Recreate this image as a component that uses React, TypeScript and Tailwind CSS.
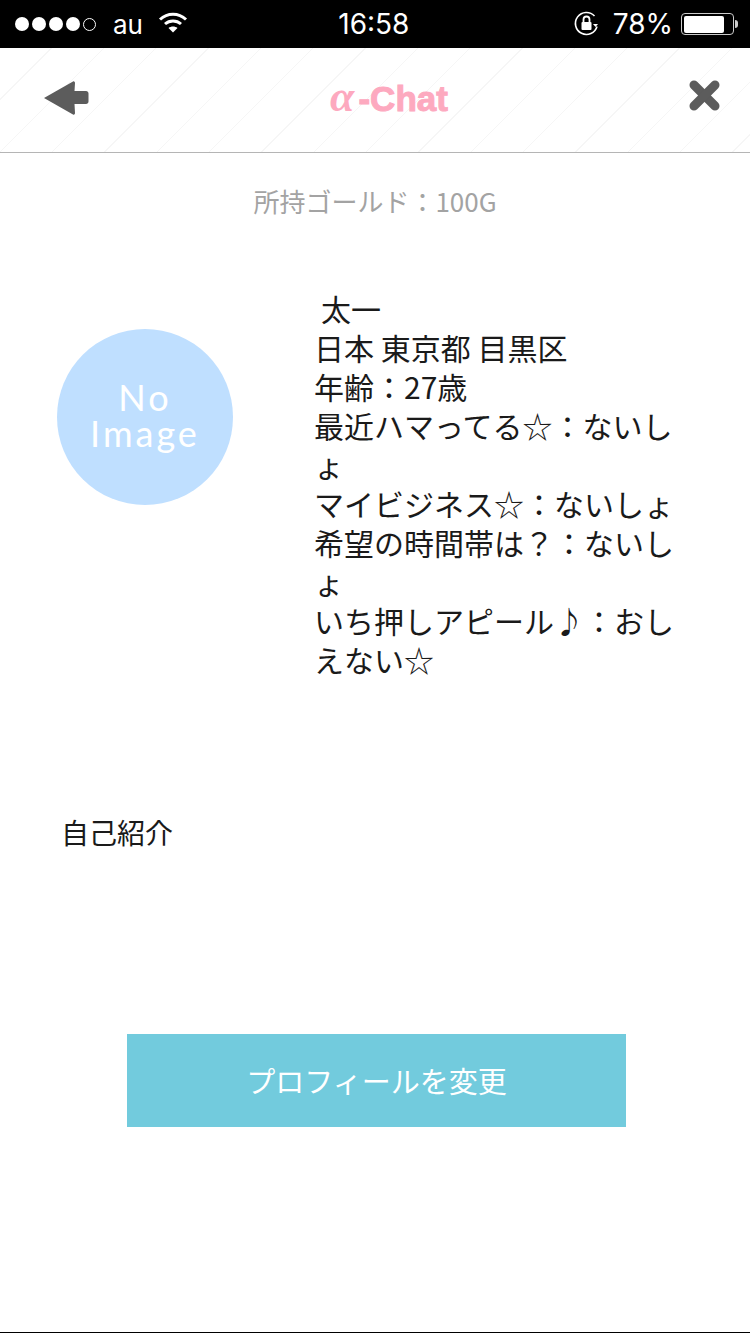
const jp = "font-['Hiragino_Sans','Noto_Sans_CJK_JP',sans-serif]";

function StatusBar() {
  return (
    <div className="flex h-[48px] items-center bg-black text-white font-['Inter','Noto_Sans',sans-serif]">
      <div className="flex w-[282px] items-center pl-[15px]">
        <div className="flex items-center gap-[3px]">
          <span className="h-[14px] w-[14px] rounded-full bg-white" />
          <span className="h-[14px] w-[14px] rounded-full bg-white" />
          <span className="h-[14px] w-[14px] rounded-full bg-white" />
          <span className="h-[14px] w-[14px] rounded-full bg-white" />
          <span className="h-[13px] w-[13px] rounded-full border border-white" />
        </div>
        <span className="ml-[17px] text-[26px] leading-[30px] mt-[2px]">au</span>
        <svg className="ml-[15px] mb-[4px]" width="30" height="22" viewBox="0 0 30 22" fill="none" stroke="white" strokeWidth="3">
          <path d="M2 8.5C9.5 1.5 20.5 1.5 28 8.5" />
          <path d="M7 13C11.5 9 18.5 9 23 13" />
          <path d="M15 21.5L10.5 17C13 15 17 15 19.5 17Z" fill="white" stroke="none" />
        </svg>
      </div>
      <div className="w-[136px] pl-[58px] text-[28px] leading-[34px] whitespace-nowrap">16:58</div>
      <div className="flex flex-1 items-center pl-[156px] -ml-[0px]" />
      <div className="flex items-center pr-[12px]">
        <svg width="30" height="30" viewBox="0 0 30 30" fill="none" stroke="white" strokeWidth="1.6">
          <path d="M25 17.5A11 11 0 1 1 22.5 7" />
          <path d="M21 15L26 15L23.5 18Z" fill="white" stroke="none" />
          <rect x="9.5" y="13" width="10" height="8" rx="1" fill="white" stroke="none" />
          <path d="M11.5 13V10.5a3 3 0 0 1 6 0V13" strokeWidth="1.8" />
        </svg>
        <span className="ml-[11px] text-[28px] leading-[34px]">78%</span>
        <div className="ml-[8px] flex items-center">
          <div className="h-[22px] w-[53px] rounded-[4px] border border-[#cccccc] p-[1.5px]">
            <div className="h-full w-[40px] rounded-[2px] bg-white" />
          </div>
          <div className="ml-[1px] h-[8px] w-[3px] rounded-r-full bg-[#cccccc]" />
        </div>
      </div>
    </div>
  );
}

function Header() {
  return (
    <div className="flex h-[105px] items-center justify-between border-b border-[#b5b5b5] bg-[repeating-linear-gradient(135deg,#ffffff,#ffffff_36px,#f6f6f6_36px,#f6f6f6_37px)] pb-[4px] pl-[43px] pr-[55px]">
      <svg width="46" height="36" viewBox="0 0 46 36" fill="#5c5c5c">
        <path d="M1 18L30 1.5C31 1 32 2 32 3L31.5 11H43C44.5 11 45.5 12 45.5 13.500V21.500C45.500 23 44.500 24 43 24H31.500L32 33C32 34.500 31 35 30 34.500Z" />
      </svg>
      <div className={`flex items-baseline font-bold text-[#fda9bf] ${jp}`}>
        <span className="font-['Liberation_Serif',serif] text-[44px] leading-[44px] italic">α</span>
        <span className="ml-[4px] font-['Liberation_Sans',sans-serif] text-[35px] leading-[44px] [-webkit-text-stroke:1px_#fda9bf]">-Chat</span>
      </div>
      <svg className="mb-[6px] -mr-[25px]" width="31" height="31" viewBox="0 0 31 31" fill="none" stroke="#5c5c5c" strokeWidth="9" strokeLinecap="round">
        <path d="M5 5L26 26" />
        <path d="M26 5L5 26" />
      </svg>
    </div>
  );
}

function Profile() {
  return (
    <div className="mt-[69px] flex">
      <div className="ml-[57px] mt-[40px] flex h-[176px] w-[176px] flex-col items-center justify-center rounded-full bg-[#bfdfff] pb-[4px] font-['Lato','Inter',sans-serif] text-[36px] leading-[36px] tracking-[3px] text-white">
        <span>No</span>
        <span>Image</span>
      </div>
      <div className={`ml-[81px] w-[372px] text-[30px] leading-[39px] text-[#1a1a1a] ${jp}`}>
        <p className="pl-[7px]">太一</p>
        <p>日本 東京都 目黒区</p>
        <p>年齢：27歳</p>
        <p>最近ハマってる☆：ないしょ</p>
        <p>マイビジネス☆：ないしょ</p>
        <p>希望の時間帯は？：ないしょ</p>
        <p>いち押しアピール♪：おしえない☆</p>
      </div>
    </div>
  );
}

export default function App() {
  return (
    <div className={`flex h-[1334px] w-[750px] flex-col bg-white ${jp}`}>
      <StatusBar />
      <Header />
      <p className="mt-[29px] text-center text-[26px] leading-[38px] text-[#a3a3a3]">所持ゴールド：100G</p>
      <Profile />
      <p className="mt-[134px] ml-[61px] text-[28px] leading-[38px] text-[#1a1a1a]">自己紹介</p>
      <div className="mt-[183px] ml-[127px] flex h-[93px] w-[499px] items-center justify-center bg-[#72cbdd] text-[29px] text-white">
        プロフィールを変更
      </div>
      <div className="mt-auto mb-[1px] h-[1px] bg-black" />
    </div>
  );
}
